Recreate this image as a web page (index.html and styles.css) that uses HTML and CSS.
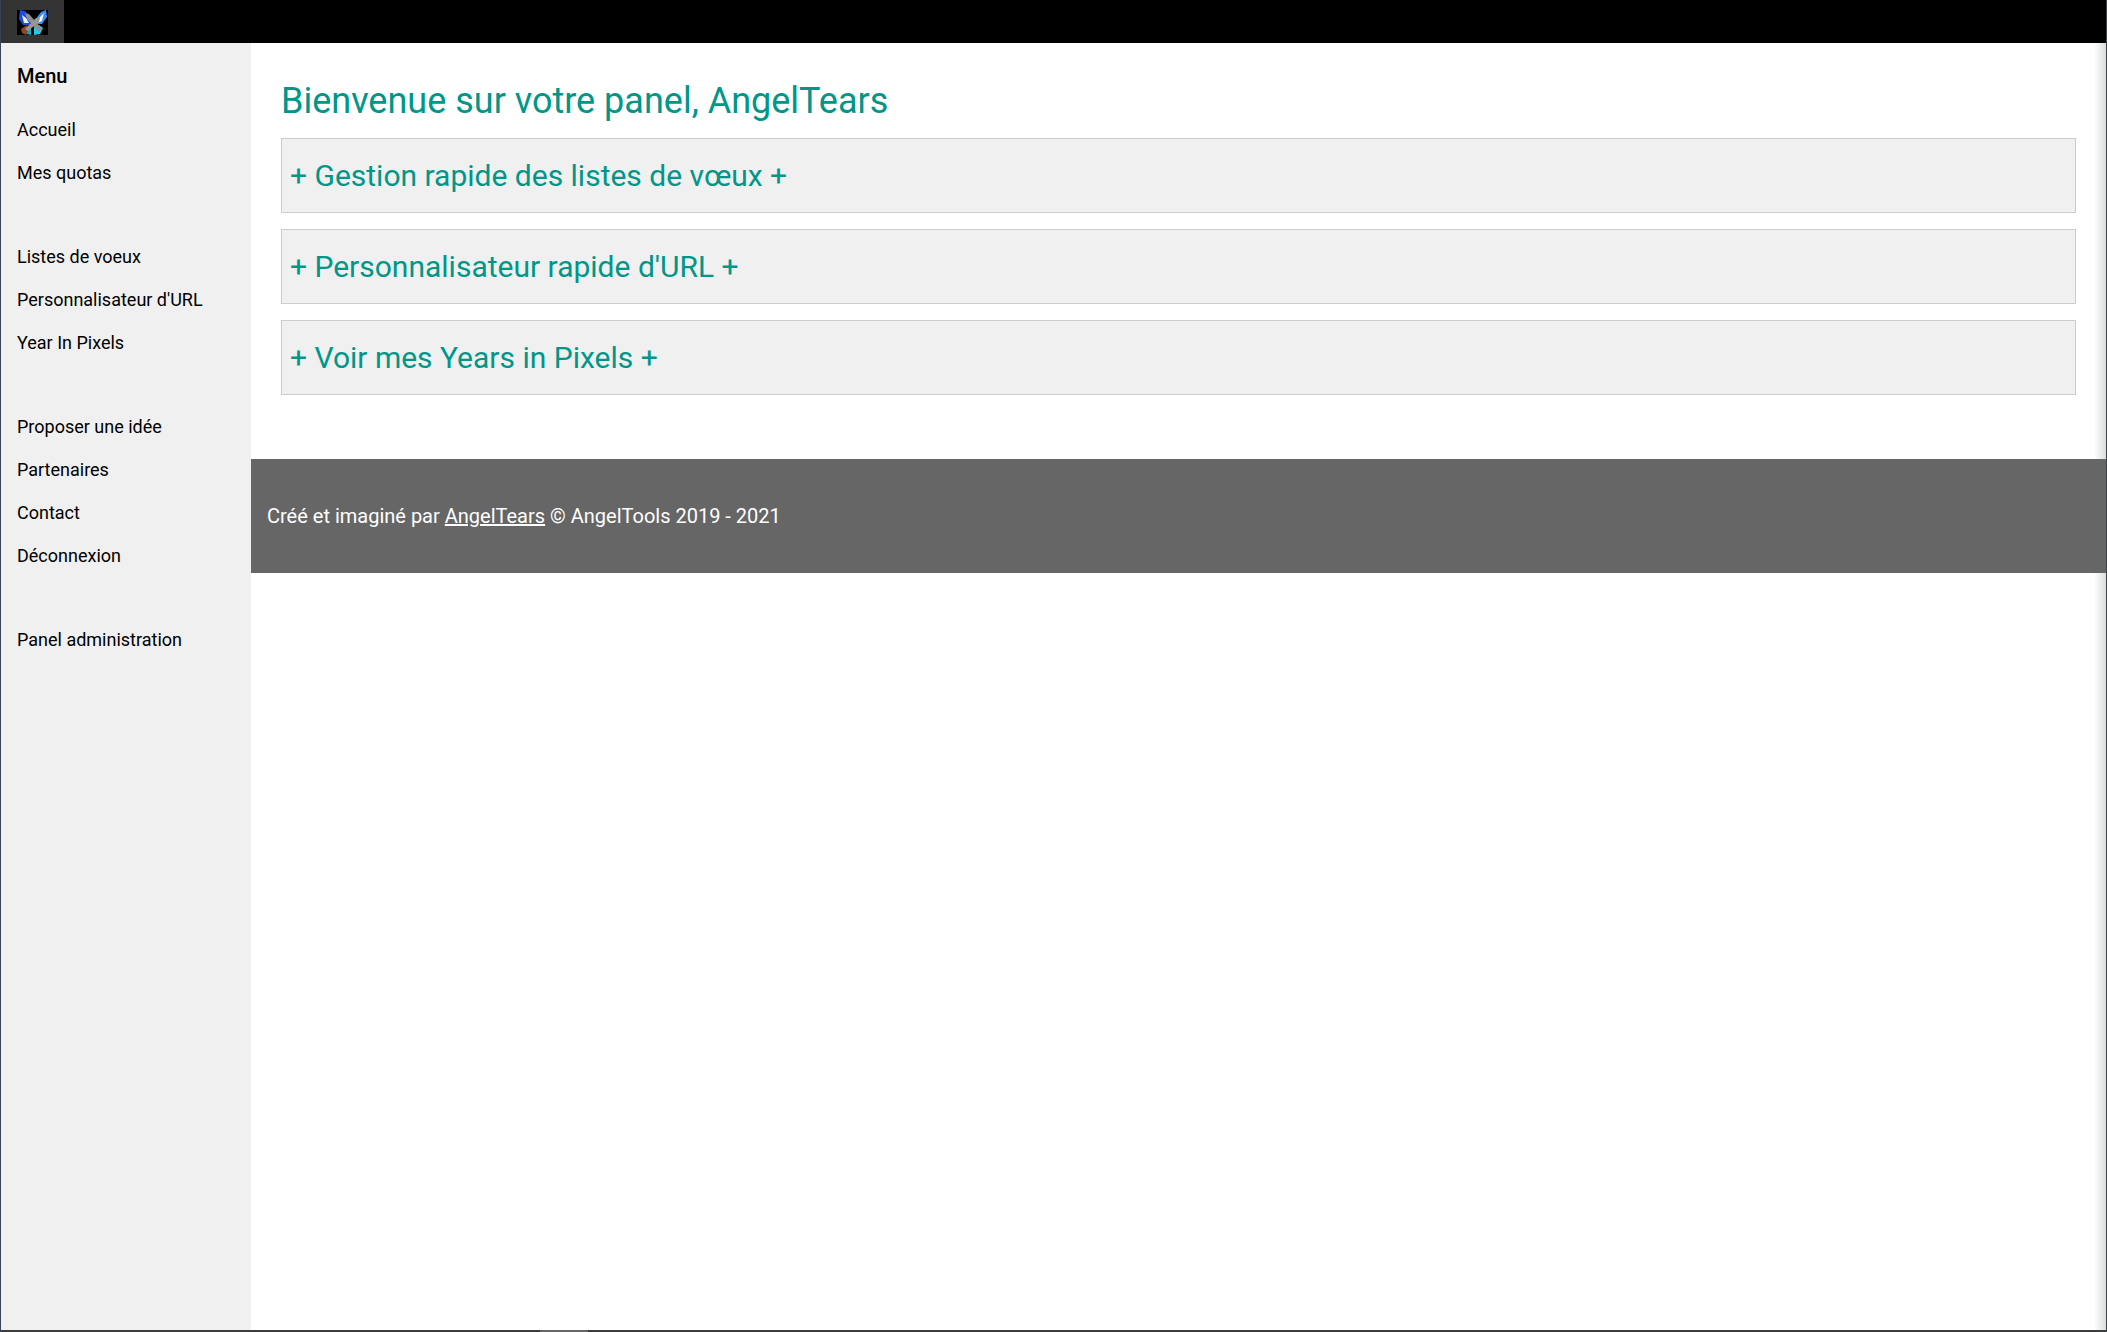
FILE: index.html
```html
<!DOCTYPE html>
<html lang="fr">
<head>
<meta charset="utf-8">
<title>AngelTools</title>
<link rel="stylesheet" href="styles.css">
</head>
<body>
<div class="frame">
  <header class="topbar">
    <a class="logo-tab" href="#">
      <svg class="logo" viewBox="0 0 31 25" width="31" height="25" aria-hidden="true">
        <defs>
          <filter id="soft" x="-20%" y="-20%" width="140%" height="140%"><feGaussianBlur stdDeviation="0.7"/></filter>
        </defs>
        <rect width="31" height="25" fill="#000"/>
        <g filter="url(#soft)">
          <path d="M3 0 L8 1 L14 11 L13 15 L6 15 L2 9Z" fill="#1c4be0"/>
          <path d="M29 0 L24 2 L18 10 L18 14 L25 14 L30 7Z" fill="#3a8cf0"/>
          <path d="M5 5 L9 8 L12 13 L7 13Z" fill="#eef3ff"/>
          <path d="M27 3 L22 8 L20 13 L25 11Z" fill="#f4f8ff"/>
          <path d="M9 17 L14 17 L14 25 L10 24Z" fill="#12a8c8"/>
          <path d="M22 15 L17 17 L17 25 L23 24 L26 18Z" fill="#1fd0e8"/>
          <path d="M4 19 L10 15 L12 20 L9 25 L5 23Z" fill="#8f4a28"/>
        </g>
        <g filter="url(#soft)">
          <path d="M8 3 L12 4 L25 19 L22 22 L10 9Z" fill="#8e8e8e"/>
          <path d="M23 8 L19 8 L8 19 L11 21 L22 12Z" fill="#979797"/>
        </g>
      </svg>
    </a>
  </header>
  <div class="body-row">
    <nav class="sidebar">
      <h4 class="menu-title">Menu</h4>
      <div class="menu-group">
        <a href="#">Accueil</a>
        <a href="#">Mes quotas</a>
      </div>
      <div class="menu-group">
        <a href="#">Listes de voeux</a>
        <a href="#">Personnalisateur d'URL</a>
        <a href="#">Year In Pixels</a>
      </div>
      <div class="menu-group">
        <a href="#">Proposer une idée</a>
        <a href="#">Partenaires</a>
        <a href="#">Contact</a>
        <a href="#">Déconnexion</a>
      </div>
      <div class="menu-group">
        <a href="#">Panel administration</a>
      </div>
    </nav>
    <div class="main">
      <section class="content">
        <h1 class="welcome">Bienvenue sur votre panel, AngelTears</h1>
        <div class="panel"><h2>+ Gestion rapide des listes de vœux +</h2></div>
        <div class="panel"><h2>+ Personnalisateur rapide d'URL +</h2></div>
        <div class="panel"><h2>+ Voir mes Years in Pixels +</h2></div>
      </section>
      <footer class="footer">
        <p>Créé et imaginé par <a href="#">AngelTears</a> © AngelTools 2019 - 2021</p>
      </footer>
    </div>
  </div>
  <div class="edge-strip"><span class="edge-mark"></span></div>
</div>
</body>
</html>
```
FILE: styles.css
```css
* { box-sizing: border-box; }
html, body { margin: 0; height: 100%; overflow: hidden; }
body {
  background: #3b4254;
  font-family: Roboto, "Liberation Sans", sans-serif;
  font-size: 18px;
  padding: 0 1px;
}
.frame { height: 100%; display: flex; flex-direction: column; background: #fff; }
.topbar { height: 43px; background: #000; display: flex; flex: none; }
.logo-tab {
  width: 63px;
  background: #333;
  display: flex;
  align-items: center;
  justify-content: center;
}
.logo { display: block; margin-top: 1px; }
.body-row { flex: 1; display: flex; min-height: 0; }
.sidebar { width: 250px; flex: none; background: #f0f0f0; padding-top: 17px; }
.menu-title {
  margin: 0;
  padding: 0 16px;
  font-size: 20px;
  font-weight: 500;
  line-height: 33px;
  color: #000;
}
.menu-group { margin-bottom: 41px; }
.menu-title + .menu-group { margin-top: 15px; }
.menu-group a {
  display: block;
  padding: 8px 16px;
  height: 43px;
  line-height: 27px;
  color: #000;
  text-decoration: none;
}
.main { flex: 1; min-width: 0; background: linear-gradient(to right, #fff calc(100% - 12px), #dcdcdc); }
.content { padding: 33px 30px 64px 30px; }
.welcome {
  margin: 0 0 11px;
  font-size: 36px;
  font-weight: 400;
  line-height: 51px;
  color: #009688;
}
.panel {
  height: 75px;
  margin-bottom: 16px;
  background: #f0f0f0;
  border: 1px solid #ccc;
  display: flex;
  align-items: center;
  padding: 0 8px;
}
.panel:last-child { margin-bottom: 0; }
.panel h2 { margin: 0; font-size: 30px; font-weight: 400; color: #009688; }
.footer {
  height: 114px;
  background: #666;
  color: #fff;
  display: flex;
  align-items: center;
  padding: 0 16px;
  font-size: 20px;
}
.footer p { margin: 0; }
.footer a { color: #fff; }
.edge-strip { height: 2px; flex: none; background: #3d3d3d; padding-left: 539px; }
.edge-mark { display: block; width: 48px; height: 2px; background: #666; }
```
